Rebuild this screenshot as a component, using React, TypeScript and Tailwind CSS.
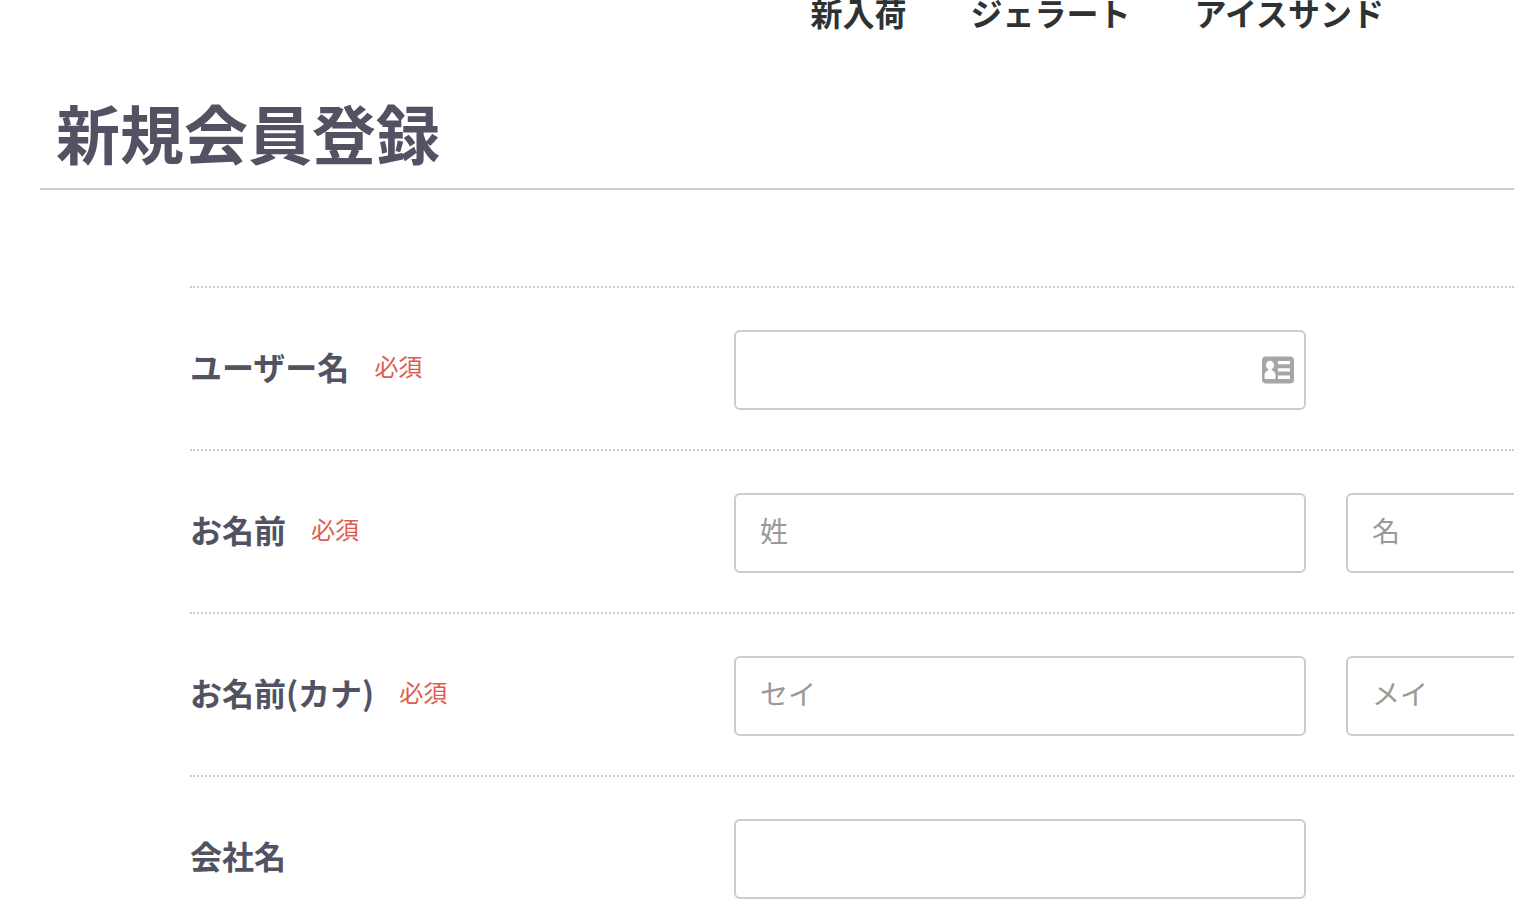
type Campo = {
  id: string;
  placeholder?: string;
  label?: string;
  card?: boolean;
};

type RowProps = {
  title: string;
  required?: boolean;
  fields: Campo[];
};

const navItems = ["新入荷", "ジェラート", "アイスサンド"];

const rows: RowProps[] = [
  { title: "ユーザー名", required: true, fields: [{ id: "username", card: true }] },
  {
    title: "お名前",
    required: true,
    fields: [
      { id: "name01", placeholder: "姓" },
      { id: "name02", placeholder: "名", label: "名" },
    ],
  },
  {
    title: "お名前(カナ)",
    required: true,
    fields: [
      { id: "kana01", placeholder: "セイ" },
      { id: "kana02", placeholder: "メイ", label: "メイ" },
    ],
  },
  { title: "会社名", fields: [{ id: "company" }] },
];

function CardIcon() {
  return (
    <svg
      className="pointer-events-none absolute right-3 top-[26px] h-7 w-8"
      viewBox="0 0 32 28"
      aria-hidden="true"
    >
      <rect y="0.5" width="32" height="27" rx="4" fill="#a6a6a6" />
      <g fill="#fff">
        <ellipse cx="8" cy="9.2" rx="4" ry="4.4" />
        <path d="M6.400 12h3.200v2.200c2.600.8 3.900 2.800 3.900 5.400V23H2.500v-3.400c0-2.600 1.300-4.600 3.900-5.400z" />
        <path d="M16 5h12v3.200H16zM16 12.200h12v3.200H16zM16 19.600h12V23H16z" />
      </g>
    </svg>
  );
}

function FormRow({ title, required, fields }: RowProps) {
  return (
    <div className="flex items-center border-t-2 border-dotted border-[#ccc] pt-[42px] pb-[39px]">
      <div className="flex w-[544px] shrink-0 items-center gap-[25px] pb-2">
        <label htmlFor={fields[0].id} className="text-[32px] leading-[48px] font-bold">
          {title}
        </label>
        {required ? (
          <span className="text-2xl leading-9 text-[#de5d50]">必須</span>
        ) : null}
      </div>
      <div className="flex gap-10">
        {fields.map((field) => (
          <div key={field.id} className="relative w-[572px] shrink-0">
            <input
              id={field.id}
              type="text"
              placeholder={field.placeholder}
              aria-label={field.label}
              className="block h-20 w-full rounded-md border-2 border-[#ccc] bg-white px-6 pb-1.5 text-[28px] outline-none placeholder:text-[#999]"
            />
            {field.card ? <CardIcon /> : null}
          </div>
        ))}
      </div>
    </div>
  );
}

export default function App() {
  return (
    <div className="min-h-screen overflow-x-hidden bg-white font-['Noto_Sans_CJK_JP','Noto_Serif_CJK_JP',sans-serif] text-[#525263]">
      <nav className="flex justify-end gap-16 pr-[130px] text-[32px] leading-6 font-bold text-[#2e3233]">
        {navItems.map((item) => (
          <a key={item} href="#">
            {item}
          </a>
        ))}
      </nav>

      <main>
        <h1 className="mt-16 ml-10 border-b-2 border-[#ccc] pb-3.5 pl-4 text-[64px] leading-[86px] font-bold">
          新規会員登録
        </h1>

        <form className="mt-24 ml-[190px]">
          {rows.map((row) => (
            <FormRow key={row.title} {...row} />
          ))}
        </form>
      </main>
    </div>
  );
}
